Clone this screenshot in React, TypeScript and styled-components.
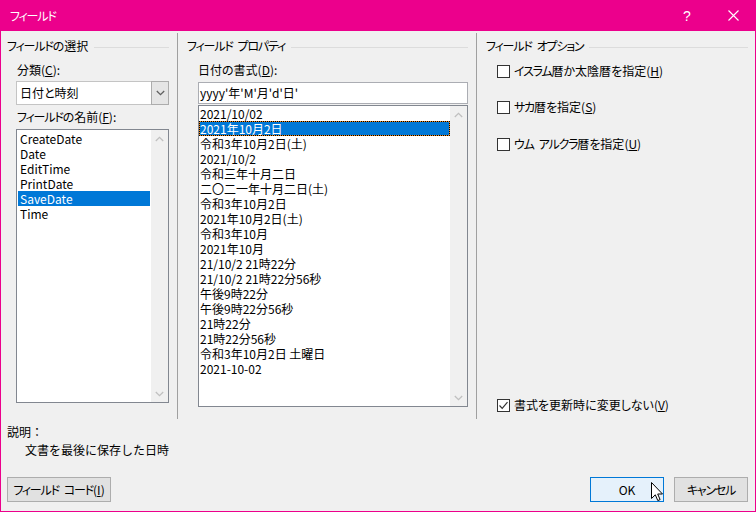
import styled, { createGlobalStyle } from 'styled-components';

const GlobalStyle = createGlobalStyle`
  html, body {
    margin: 0;
    padding: 0;
    background: #f0f0f0;
  }
  * {
    box-sizing: border-box;
  }
`;

const PINK = '#ec008c';

const Window = styled.div`
  width: 756px;
  height: 512px;
  display: flex;
  flex-direction: column;
  border: 1px solid ${PINK};
  border-top: none;
  background: #f0f0f0;
  color: #000;
  font-family: "Noto Sans CJK JP", "Noto Sans", sans-serif;
  font-feature-settings: "palt";
  font-size: 12px;
  line-height: 16px;
  position: relative;
`;

// katakana in the original UI font is much narrower than in Noto
const Kana = styled.span`
  letter-spacing: -1.2px;
`;

const WordGap = styled.span`
  display: inline-block;
  width: 5px;
`;

const KATAKANA = /([\u30A0-\u30FF]+| )/;

const Jp = ({ text }: { text: string }) => (
  <>
    {text.split(KATAKANA).map((part, i) => {
      if (part === ' ') return <WordGap key={i} />;
      return KATAKANA.test(part) ? <Kana key={i}>{part}</Kana> : part;
    })}
  </>
);

const TitleBar = styled.div`
  height: 31px;
  margin: 0 -1px;
  background: ${PINK};
  color: #fff;
  display: flex;
  align-items: center;
  padding-left: 10px;
`;

const TitleText = styled.div`
  flex: 1;
  font-size: 12px;
`;

const TitleButton = styled.div`
  width: 46px;
  height: 31px;
  display: flex;
  align-items: center;
  justify-content: center;
  font-size: 14px;
  font-family: "Liberation Sans", sans-serif;
`;

const Columns = styled.div`
  display: flex;
  height: 386px;
  margin-top: 2px;
`;

const Column = styled.div<{ $width?: number; $divided?: boolean; $padLeft: number; $padRight: number }>`
  ${({ $width }) => ($width ? `width: ${$width}px;` : 'flex: 1;')}
  border-left: ${({ $divided }) => ($divided ? '1px solid #a0a0a0' : 'none')};
  padding: 5px ${({ $padRight }) => $padRight}px 6px ${({ $padLeft }) => $padLeft}px;
  display: flex;
  flex-direction: column;
`;

const GroupHeader = styled.div`
  display: flex;
  align-items: center;
  height: 16px;
  white-space: nowrap;

  &::after {
    content: '';
    flex: 1;
    height: 1px;
    margin-left: 6px;
    margin-top: 2px;
    background: #dcdcdc;
  }
`;

const Label = styled.div<{ $indent: number; $top: number }>`
  margin: ${({ $top }) => $top}px 0 0 ${({ $indent }) => $indent}px;
  height: 16px;
  white-space: nowrap;
`;

const Combo = styled.div`
  margin: 3px 0 0 9px;
  height: 24px;
  display: flex;
  background: #fff;
  border: 1px solid #c4c4c4;
`;

const ComboText = styled.div`
  flex: 1;
  padding-left: 3px;
  display: flex;
  align-items: center;
`;

const ComboButton = styled.div`
  width: 18px;
  margin: -1px -1px -1px 0;
  background: #e5e5e5;
  border: 1px solid #acacac;
  display: flex;
  align-items: center;
  justify-content: center;
`;

const TextInput = styled.div`
  margin: 4px 0 0 11px;
  height: 22px;
  background: #fff;
  border: 1px solid #abadb3;
  padding-left: 1px;
  display: flex;
  align-items: center;
  white-space: nowrap;
`;

const ListBox = styled.div<{ $top: number; $indent: number; $height: number }>`
  margin: ${({ $top }) => $top}px 0 0 ${({ $indent }) => $indent}px;
  height: ${({ $height }) => $height}px;
  background: #fff;
  border: 1px solid #828790;
  display: flex;
`;

const ListItems = styled.div<{ $pad: number }>`
  flex: 1;
  padding: ${({ $pad }) => $pad}px;
`;

const ListItem = styled.div<{ $selected?: boolean; $focused?: boolean; $textPad: number }>`
  height: 15px;
  line-height: 15px;
  padding-left: ${({ $textPad }) => $textPad}px;
  white-space: nowrap;
  background: ${({ $selected }) => ($selected ? '#0078d7' : 'transparent')};
  color: ${({ $selected }) => ($selected ? '#fff' : '#000')};
  ${({ $focused }) => ($focused
    ? `
    box-shadow: inset 0 0 0 1px #f08a1c;
    outline: 1px dotted #000;
    outline-offset: -1px;
  `
    : '')}
`;

const ScrollTrack = styled.div`
  width: 17px;
  background: #f0f0f0;
  display: flex;
  flex-direction: column;
  justify-content: space-between;
  align-items: center;
  padding: 6px 0 5px;
`;

const CheckRow = styled.label<{ $top?: number; $auto?: boolean }>`
  display: flex;
  align-items: center;
  height: 16px;
  margin: ${({ $top, $auto }) => ($auto ? 'auto' : `${$top}px`)} 0 0 11px;
  white-space: nowrap;
`;

const CheckBox = styled.span`
  width: 13px;
  height: 13px;
  border: 1px solid #333;
  background: #fff;
  margin-right: 4px;
  display: flex;
  align-items: center;
  justify-content: center;
`;

const Description = styled.div`
  margin-top: 5px;
  padding-left: 6px;
`;

const DescLine = styled.div<{ $indent?: number; $top?: number }>`
  height: 16px;
  margin: ${({ $top }) => $top || 0}px 0 0 ${({ $indent }) => $indent || 0}px;
  font-feature-settings: normal;
`;

const ButtonRow = styled.div`
  display: flex;
  align-items: center;
  margin-top: 19px;
  padding: 0 7px 0 6px;
  gap: 10px;
`;

const Spacer = styled.div`
  flex: 1;
`;

const Button = styled.div<{ $width: number; $default?: boolean }>`
  width: ${({ $width }) => $width}px;
  height: 25px;
  display: flex;
  align-items: center;
  justify-content: center;
  background: ${({ $default }) => ($default ? '#e5f1fb' : '#e1e1e1')};
  border: 1px solid ${({ $default }) => ($default ? '#0078d7' : '#adadad')};
  white-space: nowrap;
`;

const Cursor = styled.svg`
  position: absolute;
  left: 650px;
  top: 482px;
`;

const Chevron = ({ up, color }: { up?: boolean; color: string }) => (
  <svg width="9" height="6" viewBox="0 0 9 6">
    <path
      d={up ? 'M0.8 5 L4.5 1.3 L8.2 5' : 'M0.8 1 L4.5 4.7 L8.2 1'}
      fill="none"
      stroke={color}
      strokeWidth="1.3"
    />
  </svg>
);

const Scrollbar = () => (
  <ScrollTrack>
    <Chevron up color="#c0c0c0" />
    <Chevron color="#c0c0c0" />
  </ScrollTrack>
);

const fieldNames = ['CreateDate', 'Date', 'EditTime', 'PrintDate', 'SaveDate', 'Time'];

const formats = [
  '2021/10/02',
  '2021年10月2日',
  '令和3年10月2日(土)',
  '2021/10/2',
  '令和三年十月二日',
  '二〇二一年十月二日(土)',
  '令和3年10月2日',
  '2021年10月2日(土)',
  '令和3年10月',
  '2021年10月',
  '21/10/2 21時22分',
  '21/10/2 21時22分56秒',
  '午後9時22分',
  '午後9時22分56秒',
  '21時22分',
  '21時22分56秒',
  '令和3年10月2日 土曜日',
  '2021-10-02',
];

const App = () => (
  <>
    <GlobalStyle />
    <Window>
      <TitleBar>
        <TitleText><Jp text="フィールド" /></TitleText>
        <TitleButton>?</TitleButton>
        <TitleButton>
          <svg width="11" height="11" viewBox="0 0 11 11">
            <path d="M0.5 0.5 L10.5 10.5 M10.5 0.5 L0.5 10.5" stroke="#fff" strokeWidth="1.1" />
          </svg>
        </TitleButton>
      </TitleBar>

      <Columns>
        <Column $width={176} $padLeft={6} $padRight={8}>
          <GroupHeader><Jp text="フィールドの選択" /></GroupHeader>
          <Label $indent={10} $top={8}>
            分類(<u>C</u>):
          </Label>
          <Combo>
            <ComboText>日付と時刻</ComboText>
            <ComboButton>
              <Chevron color="#606060" />
            </ComboButton>
          </Combo>
          <Label $indent={10} $top={4}>
            <Jp text="フィールドの名前" />(<u>F</u>):
          </Label>
          <ListBox $top={4} $indent={9} $height={274}>
            <ListItems $pad={1}>
              {fieldNames.map((name) => (
                <ListItem key={name} $textPad={2} $selected={name === 'SaveDate'}>
                  {name}
                </ListItem>
              ))}
            </ListItems>
            <Scrollbar />
          </ListBox>
        </Column>

        <Column $width={299} $divided $padLeft={9} $padRight={8}>
          <GroupHeader><Jp text="フィールド プロパティ" /></GroupHeader>
          <Label $indent={11} $top={8}>
            日付の書式(<u>D</u>):
          </Label>
          <TextInput>yyyy&apos;年&apos;M&apos;月&apos;d&apos;日&apos;</TextInput>
          <ListBox $top={1} $indent={11} $height={302}>
            <ListItems $pad={0}>
              {formats.map((f, i) => (
                <ListItem key={f} $textPad={1} $selected={i === 1} $focused={i === 1}>
                  {f}
                </ListItem>
              ))}
            </ListItems>
            <Scrollbar />
          </ListBox>
        </Column>

        <Column $divided $padLeft={9} $padRight={7}>
          <GroupHeader><Jp text="フィールド オプション" /></GroupHeader>
          <CheckRow $top={9}>
            <CheckBox />
            <Jp text="イスラム暦か太陰暦を指定" />(<u>H</u>)
          </CheckRow>
          <CheckRow $top={20}>
            <CheckBox />
            <Jp text="サカ暦を指定" />(<u>S</u>)
          </CheckRow>
          <CheckRow $top={21}>
            <CheckBox />
            <Jp text="ウム アルクラ暦を指定" />(<u>U</u>)
          </CheckRow>
          <CheckRow $auto>
            <CheckBox>
              <svg width="11" height="11" viewBox="0 0 11 11">
                <path d="M1.5 5.5 L4.2 8.3 L9.5 2.2" fill="none" stroke="#333" strokeWidth="1.2" />
              </svg>
            </CheckBox>
            書式を更新時に変更しない(<u>V</u>)
          </CheckRow>
        </Column>
      </Columns>

      <Description>
        <DescLine>説明：</DescLine>
        <DescLine $indent={18} $top={2}>文書を最後に保存した日時</DescLine>
      </Description>

      <ButtonRow>
        <Button $width={104}>
          <Jp text="フィールド コード" />(<u>I</u>)
        </Button>
        <Spacer />
        <Button $width={74} $default>OK</Button>
        <Button $width={74}><Jp text="キャンセル" /></Button>
      </ButtonRow>

      <Cursor width="13" height="20" viewBox="0 0 13 20">
        <path
          d="M0.5 0.5 L0.5 16.5 L4.3 12.8 L6.8 18.6 L9.1 17.6 L6.7 12 L11.5 12 Z"
          fill="#fff"
          stroke="#000"
          strokeWidth="1"
          strokeLinejoin="miter"
        />
      </Cursor>
    </Window>
  </>
);

export default App;
